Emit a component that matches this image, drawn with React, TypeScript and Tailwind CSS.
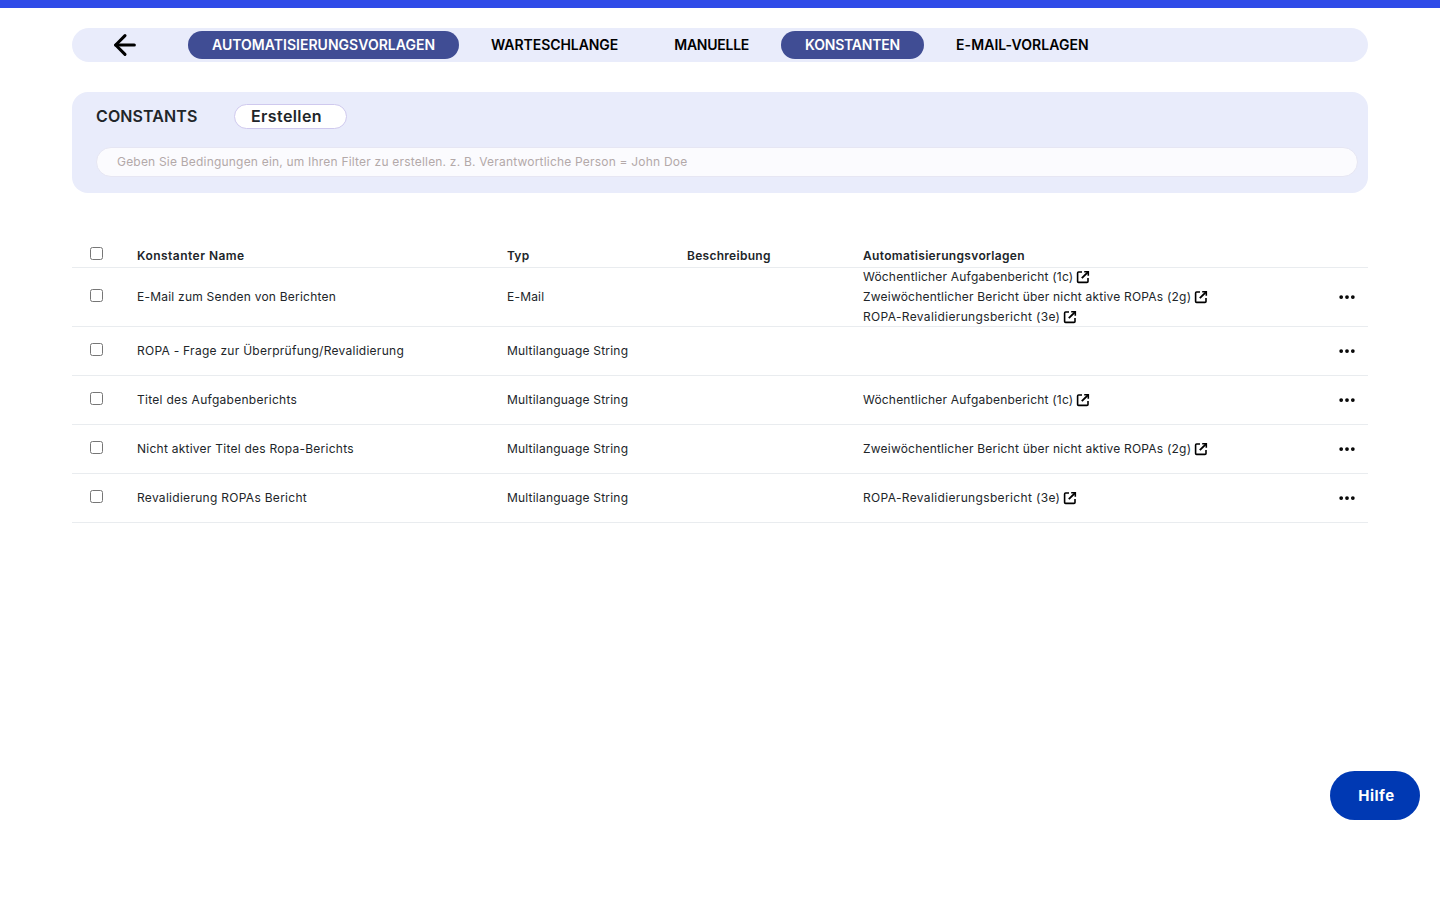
import { ArrowLeft, Ellipsis } from 'lucide-react'

const tabs = [
  { label: 'AUTOMATISIERUNGSVORLAGEN', active: true, spacing: 'tracking-[0.02px]' },
  { label: 'WARTESCHLANGE', active: false, spacing: 'tracking-[-0.06px]' },
  { label: 'MANUELLE', active: false, spacing: 'tracking-[-0.25px]' },
  { label: 'KONSTANTEN', active: true, spacing: 'tracking-[-0.2px]' },
  { label: 'E-MAIL-VORLAGEN', active: false, spacing: 'tracking-[0.06px]' },
]

const weekly = { label: 'Wöchentlicher Aufgabenbericht (1c)', spacing: 'tracking-[0.2px]' }
const biweekly = { label: 'Zweiwöchentlicher Bericht über nicht aktive ROPAs (2g)', spacing: 'tracking-[0.21px]' }
const revalidation = { label: 'ROPA-Revalidierungsbericht (3e)', spacing: 'tracking-[0.35px]' }

const rows = [
  { name: 'E-Mail zum Senden von Berichten', spacing: 'tracking-[0.22px]', type: 'E-Mail', templates: [weekly, biweekly, revalidation] },
  { name: 'ROPA - Frage zur Überprüfung/Revalidierung', spacing: 'tracking-[0.27px]', type: 'Multilanguage String', templates: [] },
  { name: 'Titel des Aufgabenberichts', spacing: 'tracking-[0.28px]', type: 'Multilanguage String', templates: [weekly] },
  { name: 'Nicht aktiver Titel des Ropa-Berichts', spacing: 'tracking-[0.25px]', type: 'Multilanguage String', templates: [biweekly] },
  { name: 'Revalidierung ROPAs Bericht', spacing: 'tracking-[0.29px]', type: 'Multilanguage String', templates: [revalidation] },
]

const gridCols = 'grid grid-cols-[65px_370px_180px_176px_1fr_42px]'

function OpenIcon() {
  return (
    <svg viewBox="0 0 16 16" className="h-4 w-4 text-black" fill="none" stroke="currentColor" strokeWidth={1.6}>
      <path d="M7 3H3.6a1 1 0 0 0-1 1v8.4a1 1 0 0 0 1 1H12a1 1 0 0 0 1-1V9" />
      <path d="M6.8 9.2 13.2 2.8" strokeWidth={1.9} />
      <path d="M9.2 2.7h4.1v4.1" />
    </svg>
  )
}

export default function App() {
  return (
    <div className="min-h-[900px] bg-white font-['Inter',sans-serif] text-[#212529]">
      <div className="h-2 bg-[#2f4be8]" />

      <div className="px-[72px] pt-5">
        {/* Tabs */}
        <nav className="flex h-[34px] items-center rounded-full bg-[#e9ecfb]">
          <div className="flex w-[116px] shrink-0 justify-start pl-[37px]">
            <ArrowLeft className="h-8 w-8 text-black" strokeWidth={2.3} />
          </div>
          <div className="flex gap-2">
            {tabs.map((tab) => (
              <span
                key={tab.label}
                className={
                  tab.active
                    ? `flex h-7 items-center rounded-full bg-[#404d94] px-6 text-sm font-semibold text-white ${tab.spacing}`
                    : `flex h-7 items-center rounded-full px-6 text-sm font-semibold text-black ${tab.spacing}`
                }
              >
                {tab.label}
              </span>
            ))}
          </div>
        </nav>

        {/* Filter panel */}
        <section className="mt-[30px] h-[101px] rounded-2xl bg-[#e9ecfb] pl-6 pr-[10px] pt-3">
          <div className="flex h-[25px] items-center">
            <h1 className="w-[138px] pb-[2px] text-base font-semibold tracking-[0.1px]">CONSTANTS</h1>
            <button className="h-[25px] w-[113px] rounded-full border border-[#cfc9ee] bg-white pb-[2px] pl-4 text-left text-base font-semibold leading-5 tracking-[0.4px]">
              Erstellen
            </button>
          </div>
          <input
            readOnly
            placeholder="Geben Sie Bedingungen ein, um Ihren Filter zu erstellen. z. B. Verantwortliche Person = John Doe"
            className="mt-[18px] block h-[30px] w-full rounded-full border border-[#e6e6f3] bg-[#fbfbfe] pb-[2px] pl-5 text-xs tracking-[0.2px] outline-none placeholder:text-[#b3a9a9]"
          />
        </section>

        {/* Table */}
        <div className="mt-[46px] text-xs tracking-[0.2px]">
          <div className={`${gridCols} h-[29px] items-end border-b border-[#e9ecef] pb-[3px] font-semibold`}>
            <div className="flex pb-1 pl-[18px]">
              <input type="checkbox" className="h-[13px] w-[13px]" />
            </div>
            <div className="tracking-[0.47px]">Konstanter Name</div>
            <div>Typ</div>
            <div className="tracking-[0.28px]">Beschreibung</div>
            <div className="tracking-[0.33px]">Automatisierungsvorlagen</div>
            <div />
          </div>

          {rows.map((row) => (
            <div
              key={row.name}
              className={`${gridCols} min-h-[49px] items-center border-b border-[#e9ecef]`}
            >
              <div className="flex pb-[3px] pl-[18px]">
                <input type="checkbox" className="h-[13px] w-[13px]" />
              </div>
              <div className={row.spacing}>{row.name}</div>
              <div>{row.type}</div>
              <div />
              <div className="-my-px">
                {row.templates.map((template) => (
                  <div key={template.label} className={`flex h-5 items-center gap-[2px] ${template.spacing}`}>
                    {template.label}
                    <OpenIcon />
                  </div>
                ))}
              </div>
              <div className="flex pl-[11px]">
                <Ellipsis className="h-5 w-5 text-black" strokeWidth={2.5} />
              </div>
            </div>
          ))}
        </div>
      </div>

      <button className="fixed bottom-[80px] right-5 h-[49px] w-[90px] rounded-full bg-[#0039b3] pt-[2px] pl-[3px] text-[15px] font-bold tracking-[0.5px] text-white">
        Hilfe
      </button>
    </div>
  )
}
